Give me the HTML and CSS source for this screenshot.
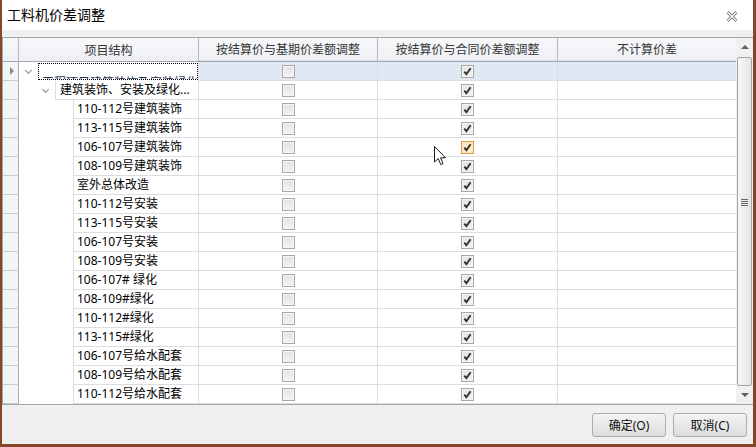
FILE: index.html
```html
<!DOCTYPE html>
<html lang="zh-CN">
<head>
    <meta charset="UTF-8">
    <title>工料机价差调整</title>
    <link rel="stylesheet" href="styles.css">
</head>
<body>

    <div class="dialog">
        <!-- Заголовок окна -->
        <div class="titlebar">
            <span class="title">工料机价差调整</span>
            <svg class="close" width="12" height="11" viewBox="0 0 12 11">
                <path d="M1.5 1 L10.5 10 M10.5 1 L1.5 10" stroke="#6b6b6b" stroke-width="3" fill="none"/>
                <path d="M1.5 1 L10.5 10 M10.5 1 L1.5 10" stroke="#ffffff" stroke-width="1.2" fill="none"/>
            </svg>
        </div>
        <div class="strip"></div>

        <!-- Таблица -->
        <div class="grid">
            <div class="table" id="table">
                <div class="row head">
                    <div class="rh"></div>
                    <div class="c c1">项目结构</div>
                    <div class="c c2">按结算价与基期价差额调整</div>
                    <div class="c c3">按结算价与合同价差额调整</div>
                    <div class="c c4">不计算价差</div>
                </div>
            </div>
            <div class="scrollbar">
                <div class="sb-btn"><span class="tri up"></span></div>
                <div class="thumb"><span class="grip"></span></div>
                <div class="sb-btn"><span class="tri down"></span></div>
            </div>
        </div>

        <div class="footer">
            <button>确定(O)</button>
            <button>取消(C)</button>
        </div>
    </div>

    <svg class="cursor" width="13" height="20" viewBox="0 0 13 20">
        <path d="M0.5 0.5 L0.5 16 L4.2 12.6 L6.8 18.6 L9.1 17.6 L6.6 11.8 L11.6 11.8 Z" fill="#fff" stroke="#1a1a1a" stroke-width="1"/>
    </svg>

    <script>
        // Строки дерева: [уровень, текст]
        const rows = [
            [0, '工程项目建筑装饰及安装绿化工程'],
            [1, '建筑装饰、安装及绿化...'],
            [2, '110-112号建筑装饰'],
            [2, '113-115号建筑装饰'],
            [2, '106-107号建筑装饰'],
            [2, '108-109号建筑装饰'],
            [2, '室外总体改造'],
            [2, '110-112号安装'],
            [2, '113-115号安装'],
            [2, '106-107号安装'],
            [2, '108-109号安装'],
            [2, '106-107# 绿化'],
            [2, '108-109#绿化'],
            [2, '110-112#绿化'],
            [2, '113-115#绿化'],
            [2, '106-107号给水配套'],
            [2, '108-109号给水配套'],
            [2, '110-112号给水配套']
        ];

        const check = '<svg width="11" height="11" viewBox="0 0 11 11"><path d="M2.3 5.6 L4.4 8.2 L8.6 2.2" stroke="#303030" stroke-width="1.9" fill="none"/></svg>';
        const table = document.getElementById('table');

        rows.forEach(function (r, i) {
            const level = r[0];
            const row = document.createElement('div');
            row.className = 'row' + (i === 0 ? ' selected' : '');
            const arrow = level < 2 ? '<span class="chev"></span>' : '';
            const cellCls = 'cell lv' + level + (i === 0 ? ' focus' : '');
            row.innerHTML =
                '<div class="rh">' + (i === 0 ? '<span class="ptr"></span>' : '') + '</div>' +
                '<div class="c c1"><span class="pre lv' + level + '">' + arrow + '</span>' +
                '<span class="' + cellCls + '"><span class="txt">' + r[1] + '</span></span></div>' +
                '<div class="c c2"><span class="cb"></span></div>' +
                '<div class="c c3"><span class="cb' + (i === 4 ? ' hot' : '') + '">' + check + '</span></div>' +
                '<div class="c c4"></div>';
            table.appendChild(row);
        });
    </script>

</body>
</html>
```

FILE: styles.css
```css
/* Основные стили */
body {
    margin: 0;
    font-family: "Noto Sans", "Noto Sans CJK SC", sans-serif;
    font-size: 12px;
    color: #1e1e1e;
    background: #ffffff;
}

.dialog {
    width: 756px;
    height: 447px;
    box-sizing: border-box;
    border: 3px solid #84472a;
    border-left-width: 2px;
    border-top: none;
    background: #f0f0f0;
    display: flex;
    flex-direction: column;
}

/* Заголовок */
.titlebar {
    height: 30px;
    flex: none;
    background: #ffffff;
    display: flex;
    align-items: center;
    justify-content: space-between;
    padding: 0 15px 0 5px;
}

.title {
    font-size: 14px;
    color: #000;
    line-height: 30px;
}

.close {
    margin-top: 2px;
}

.strip {
    height: 7px;
    flex: none;
}

/* Таблица */
.grid {
    height: 368px;
    flex: none;
    display: flex;
    background: #ffffff;
    border: 1px solid #a3a7ad;
    border-right: none;
    box-sizing: border-box;
}

.table {
    width: 733px;
    overflow: hidden;
}

.row {
    display: grid;
    grid-template-columns: 16px 180px 179px 180px 178px;
    height: 19px;
}

.row.head {
    height: 24px;
    background: linear-gradient(#f7f8fa, #eef0f4);
    border-bottom: 1px solid #a3a7b0;
    box-sizing: border-box;
}

.row.head .c {
    display: flex;
    align-items: center;
    justify-content: center;
    border-right: 1px solid #b4b8c0;
    color: #333;
}

.row.head .c4 {
    border-right: none;
}

.row.head .rh {
    border-right: 1px solid #b4b8c0;
    border-bottom: none;
    background: transparent;
}

.rh {
    background: #f4f5f7;
    border-right: 1px solid #a9adb4;
    border-bottom: 1px solid #c8cbd0;
    box-sizing: border-box;
    display: flex;
    align-items: center;
    justify-content: center;
}

.ptr {
    width: 0;
    height: 0;
    border-left: 4px solid #8a8a8a;
    border-top: 4px solid transparent;
    border-bottom: 4px solid transparent;
    margin-left: 2px;
}

.c {
    box-sizing: border-box;
}

.c2, .c3, .c4 {
    border-right: 1px solid #dadde1;
    border-bottom: 1px solid #dadde1;
    display: flex;
    align-items: center;
    justify-content: center;
}

.c4 {
    border-right: none;
}

.row.selected .c2,
.row.selected .c3,
.row.selected .c4 {
    background: #dfe8f3;
}

/* Колонка дерева */
.c1 {
    display: flex;
    border-right: 1px solid #dadde1;
}

.pre {
    flex: none;
    display: flex;
    align-items: center;
    justify-content: flex-end;
    padding-right: 7px;
    box-sizing: border-box;
}

.pre.lv0 { width: 19px; }
.pre.lv1 { width: 36px; }
.pre.lv2 { width: 54px; }

.chev {
    width: 4px;
    height: 4px;
    border-right: 1.5px solid #8c8c8c;
    border-bottom: 1.5px solid #8c8c8c;
    transform: rotate(45deg);
    margin-top: -3px;
}

.cell {
    flex: 1;
    min-width: 0;
    border-left: 1px solid #dadde1;
    border-bottom: 1px solid #dadde1;
    padding-left: 3px;
    line-height: 18px;
    white-space: nowrap;
    overflow: hidden;
    text-overflow: ellipsis;
    color: #000;
}

.cell.lv1 {
    padding-left: 4px;
}

/* Ячейка с фокусом: текст почти весь срезан */
.cell.focus {
    border: 1px dotted #000;
    margin: 1px 0 0 0;
    height: 17px;
    box-sizing: border-box;
    overflow: hidden;
}

.cell.focus .txt {
    display: block;
    margin-top: 10px;
    color: #203050;
}

/* Флажки */
.cb {
    width: 13px;
    height: 13px;
    box-sizing: border-box;
    border: 1px solid #a8a8a8;
    background: linear-gradient(#e4e4e4, #f2f2f2);
    box-shadow: inset 0 0 0 1px #f6f6f6;
    display: flex;
    align-items: center;
    justify-content: center;
}

.cb svg {
    display: block;
}

.cb.hot {
    border-color: #dd9a45;
    background: linear-gradient(#fde3b8, #fcefd6);
    box-shadow: inset 0 0 0 1px #fbe8c8;
}

/* Полоса прокрутки */
.scrollbar {
    width: 17px;
    background: #f0f0f0;
    display: flex;
    flex-direction: column;
}

.sb-btn {
    height: 18px;
    display: flex;
    align-items: center;
    justify-content: center;
}

.tri {
    width: 0;
    height: 0;
    border-left: 4px solid transparent;
    border-right: 4px solid transparent;
}

.tri.up {
    border-bottom: 4px solid #606060;
}

.tri.down {
    border-top: 4px solid #606060;
}

.thumb {
    flex: 1;
    margin: 1px 1px 0 1px;
    border: 1px solid #a2a2a2;
    border-radius: 2px;
    background: linear-gradient(to right, #f7f7f7, #e4e4e4);
    display: flex;
    align-items: center;
    justify-content: center;
}

.grip {
    width: 7px;
    height: 7px;
    background: repeating-linear-gradient(#666 0 1px, transparent 1px 2px);
    margin-bottom: 38px;
}

/* Кнопки */
.footer {
    flex: 1;
    display: flex;
    justify-content: flex-end;
    align-items: flex-start;
    gap: 7px;
    padding: 8px 6px 0 0;
}

button {
    width: 74px;
    height: 24px;
    font-family: "Noto Sans", "Noto Sans CJK SC", sans-serif;
    font-size: 12px;
    color: #111;
    border: 1px solid #acacac;
    border-radius: 3px;
    background: linear-gradient(#f3f3f3, #dddddd);
    padding: 0;
}

.cursor {
    position: absolute;
    left: 434px;
    top: 146px;
}
```
